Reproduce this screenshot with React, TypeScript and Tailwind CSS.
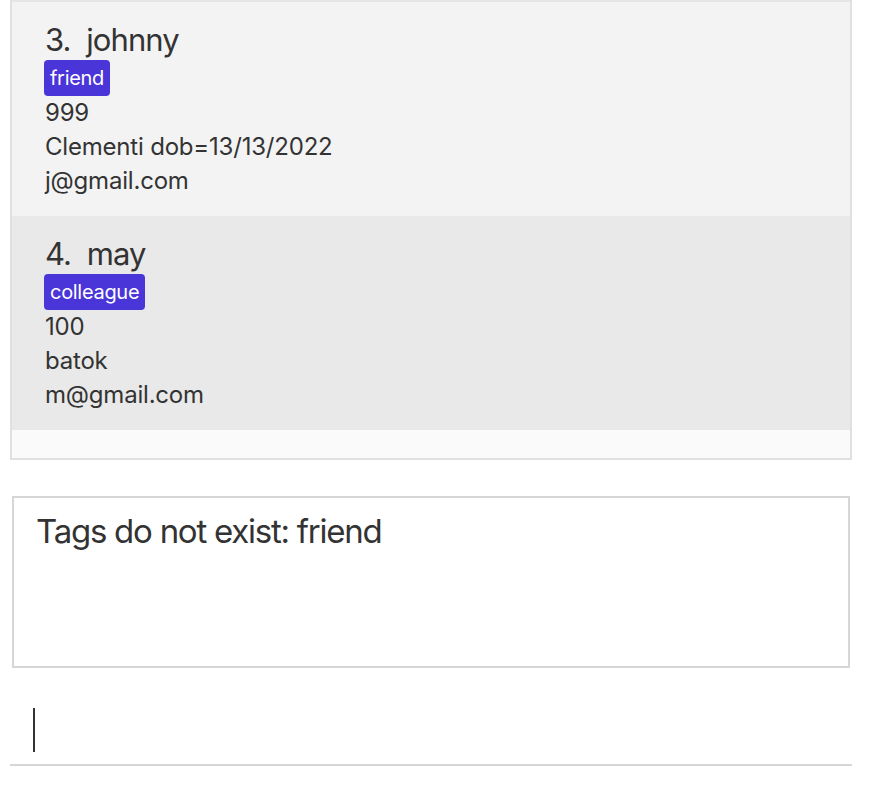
import React from "react";

type Person = { idx: number; name: string; tag: string; phone: string; address: string; email: string; bg: string };

const people: Person[] = [
  { idx: 3, name: "johnny", tag: "friend", phone: "999", address: "Clementi dob=13/13/2022", email: "j@gmail.com", bg: "bg-[#f3f3f3]" },
  { idx: 4, name: "may", tag: "colleague", phone: "100", address: "batok", email: "m@gmail.com", bg: "bg-[#e9e9e9]" },
];

function Card({ p }: { p: Person }) {
  return (
    <div className={`${p.bg} h-[214px] pl-[33px] pt-[18px] text-[#333333]`}>
      <div className="h-[40px] flex items-center text-[31px] tracking-[-0.9px] whitespace-pre">{`${p.idx}.  ${p.name}`}</div>
      <div className="flex h-[36px]">
        <span className="bg-[#4a35d9] text-white text-[20px] tracking-[-0.3px] rounded-[4px] px-[6px] flex items-center -ml-[1px]">{p.tag}</span>
      </div>
      <div className="text-[24px] leading-[34px] tracking-[-0.2px]">{p.phone}</div>
      <div className="text-[24px] leading-[34px] tracking-[-0.2px]">{p.address}</div>
      <div className="text-[24px] leading-[34px] tracking-[-0.2px]">{p.email}</div>
    </div>
  );
}

export default function App() {
  return (
    <div className="w-[870px] h-[794px] bg-white overflow-hidden" style={{ fontFamily: "Inter, 'Noto Sans', sans-serif" }}>
      <div className="ml-[10px] w-[842px] border-2 border-t-0 border-[#e0e0e0] bg-[#fafafa]">
        <div className="h-[2px] bg-[#e6e6e6]" />
        {people.map((p) => (
          <Card key={p.idx} p={p} />
        ))}
        <div className="h-[28px]" />
      </div>
      <div className="ml-[12px] mt-[36px] w-[838px] h-[172px] border-2 border-[#d6d6d6] pl-[22px] pt-[11px]">
        <div className="text-[33px] tracking-[-1.25px] text-[#333333] leading-[44px]">Tags do not exist: friend</div>
      </div>
      <div className="ml-[10px] w-[842px] h-[98px] border-b-2 border-[#d6d6d6] pt-[40px] pl-[23px]">
        <div className="w-[2px] h-[44px] bg-[#333333]" />
      </div>
    </div>
  );
}
